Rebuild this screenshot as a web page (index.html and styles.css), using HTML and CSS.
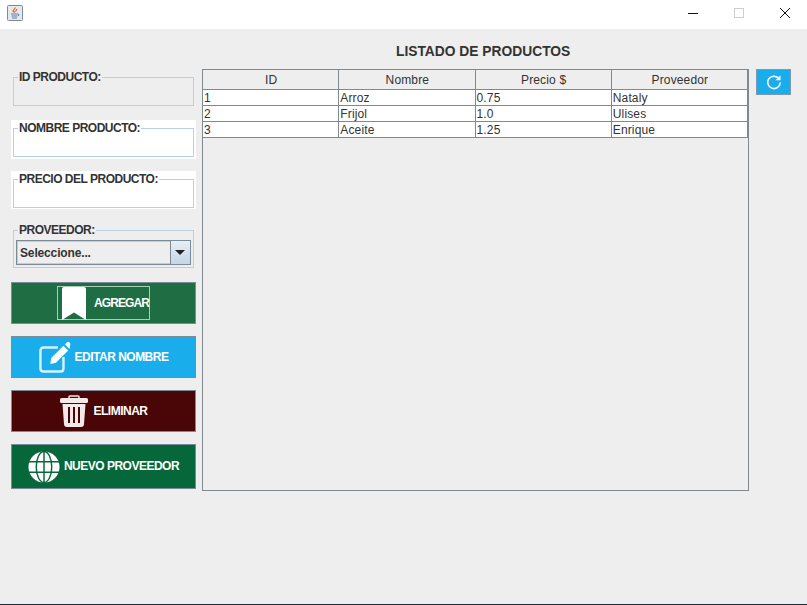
FILE: index.html
```html
<!DOCTYPE html>
<html lang="en">
<head>
  <meta charset="UTF-8" />
  <title>Productos</title>
  <link rel="stylesheet" href="styles.css">
</head>
<body>

  <div class="titlebar">
    <svg class="app-icon" width="16" height="16" viewBox="0 0 16 16">
      <rect x="0.5" y="0.5" width="15" height="15" rx="1" fill="#e4e9ef" stroke="#7f8a96"/>
      <path d="M8.500 2.500 L6 6 L8 7.500 M10 4 L8.500 6.500" fill="none" stroke="#d9662b" stroke-width="1.200"/>
      <path d="M4 9 H11 M4.500 11 H10.500 M5 13 H10" stroke="#5f7fa5" stroke-width="1"/>
      <path d="M11 9 Q13.500 9.500 11 11" fill="none" stroke="#5f7fa5"/>
    </svg>
    <div class="win-buttons">
      <svg width="12" height="12" viewBox="0 0 12 12"><path d="M1 6.500 H11" stroke="#111" stroke-width="1"/></svg>
      <svg width="12" height="12" viewBox="0 0 12 12"><rect x="1.500" y="1.500" width="9" height="9" fill="none" stroke="#cfcfcf"/></svg>
      <svg width="12" height="12" viewBox="0 0 12 12"><path d="M1 1 L11 11 M11 1 L1 11" stroke="#111" stroke-width="1"/></svg>
    </div>
  </div>

  <div class="main">
    <div class="sidebar">
      <div class="field">
        <fieldset><legend>ID PRODUCTO:</legend></fieldset>
      </div>
      <div class="field white">
        <fieldset><legend>NOMBRE PRODUCTO:</legend></fieldset>
      </div>
      <div class="field white">
        <fieldset><legend>PRECIO DEL PRODUCTO:</legend></fieldset>
      </div>
      <div class="field">
        <fieldset class="combo-set">
          <legend>PROVEEDOR:</legend>
          <div class="combo">
            <span class="combo-text">Seleccione...</span>
            <span class="combo-arrow"></span>
          </div>
        </fieldset>
      </div>

      <div class="actions">
        <div class="btn green">
          <div class="focus-box">
            <svg width="24" height="33" viewBox="0 0 24 33"><path d="M2 0 H22 Q24 0 24 2 V33 L12 25.500 L0 33 V2 Q0 0 2 0 Z" fill="#fff"/></svg>
            <span class="agregar">AGREGAR</span>
          </div>
        </div>
        <div class="btn blue">
          <svg width="32" height="32" viewBox="0 0 34 34">
            <path d="M20 7 H5 Q1.500 7 1.500 10.500 V29 Q1.500 32.500 5 32.500 H23 Q26 32.500 26 29 V17" fill="none" stroke="#d5f1fd" stroke-width="2.600"/>
            <path d="M12 24.500 L13 18 L26 5 L31 10 L18 23 Z M27.500 3.500 L29.500 1.500 Q31 0 32.500 1.500 Q34 3 33 4.500 L32.500 8.500 Z" fill="#fff"/>
          </svg>
          <span>EDITAR NOMBRE</span>
        </div>
        <div class="btn maroon">
          <svg width="28" height="32" viewBox="0 0 28 32">
            <path d="M9 3 V2 Q9 1 10 1 H18 Q19 1 19 2 V3" fill="none" stroke="#f3e9e9" stroke-width="1.500"/>
            <rect x="0" y="3" width="28" height="5" rx="1.500" fill="#f3e9e9"/>
            <path d="M2.500 9 H25.500 L24 29 Q24 32 21 32 H7 Q4 32 4 29 Z" fill="#f3e9e9"/>
            <path d="M9 12 V28 M14 12 V28 M19 12 V28" stroke="#4a0507" stroke-width="2"/>
          </svg>
          <span>ELIMINAR</span>
        </div>
        <div class="btn dark-green">
          <svg width="32" height="32" viewBox="0 0 33 33">
            <circle cx="16.500" cy="16.500" r="16" fill="#fff"/>
            <g fill="none" stroke="#06683a" stroke-width="1.500">
              <ellipse cx="16.500" cy="16.500" rx="8" ry="16"/>
              <path d="M16.500 0 V33 M1 11 H32 M1 22 H32"/>
            </g>
          </svg>
          <span>NUEVO PROVEEDOR</span>
        </div>
      </div>
    </div>

    <div class="content">
      <h1>LISTADO DE PRODUCTOS</h1>
      <div class="table-row">
        <div class="table-pane">
          <table>
            <thead>
              <tr><th>ID</th><th>Nombre</th><th>Precio $</th><th>Proveedor</th></tr>
            </thead>
            <tbody>
              <tr><td>1</td><td>Arroz</td><td>0.75</td><td>Nataly</td></tr>
              <tr><td>2</td><td>Frijol</td><td>1.0</td><td>Ulises</td></tr>
              <tr><td>3</td><td>Aceite</td><td>1.25</td><td>Enrique</td></tr>
            </tbody>
          </table>
        </div>
        <div class="refresh">
          <svg width="16" height="16" viewBox="0 0 18 18">
            <path d="M14.800 5.500 A7 7 0 1 0 16 9.500" fill="none" stroke="#fff" stroke-width="1.700"/>
            <path d="M16.300 1.500 V7 H10.800 Z" fill="#fff"/>
          </svg>
        </div>
      </div>
    </div>
  </div>

</body>
</html>
```

FILE: styles.css
```css
* {
  box-sizing: border-box;
}

html, body {
  margin: 0;
  height: 100%;
}

body {
  display: flex;
  flex-direction: column;
  height: 605px;
  overflow: hidden;
  background-color: #eeeeee;
  border-bottom: 1px solid #1c2a30;
  font-family: "Liberation Sans", Arial, sans-serif;
  color: #333;
}

.titlebar {
  display: flex;
  align-items: center;
  justify-content: space-between;
  height: 29px;
  padding: 0 16px 3px 7px;
  background: white;
}

.win-buttons {
  display: flex;
  gap: 34px;
}

.main {
  display: flex;
  flex: 1;
  padding: 0 0 0 11px;
}

.sidebar {
  width: 185px;
  margin-right: 6px;
  padding-top: 41px;
}

.field {
  padding: 0 2px;
  margin-bottom: 14px;
}

.field.white {
  background: white;
  padding: 1px 2px 2px;
  margin-bottom: 12px;
}

.field.white + .field.white {
  padding-bottom: 1px;
  margin-bottom: 14px;
}

fieldset {
  height: 36px;
  margin: 0;
  padding: 0;
  border: 1px solid #b8cfe5;
}

legend {
  margin-left: 4px;
  padding: 0 1px;
  font-size: 12px;
  font-weight: bold;
  line-height: 14px;
  letter-spacing: -0.500px;
}

.combo-set {
  height: 45px;
}

.combo {
  display: flex;
  height: 25px;
  margin: 3px 2px 0;
  border: 1px solid #7a8a99;
  background: #eeeeee;
  box-shadow: inset 0 0 0 1px #b8cfe5;
}

.combo-text {
  flex: 1;
  padding-left: 3px;
  font-size: 12px;
  font-weight: bold;
  line-height: 24px;
  letter-spacing: -0.150px;
}

.combo-arrow {
  position: relative;
  width: 20px;
  border-left: 1px solid #7a8a99;
  background: linear-gradient(#e6eef6, #c5d6e6);
}

.combo-arrow::after {
  content: "";
  position: absolute;
  left: 4px;
  top: 9px;
  border-style: solid;
  border-width: 5px 5px 0;
  border-color: #222 transparent transparent;
}

.actions {
  display: flex;
  flex-direction: column;
  gap: 12px;
}

.btn {
  display: flex;
  align-items: center;
  justify-content: center;
  gap: 4px;
  height: 42px;
  border: 1px solid #7a8a99;
  color: white;
  font-size: 12px;
  font-weight: bold;
  letter-spacing: -0.500px;
}

.btn svg {
  flex-shrink: 0;
}

.btn.green {
  background: #1f6e43;
}

.btn.blue {
  background: #19aeeb;
}

.btn.maroon {
  background: #4a0507;
  gap: 6px;
}

.btn.dark-green {
  height: 45px;
  background: #06683a;
}

.dark-green span {
  margin-bottom: 2px;
}

.focus-box {
  display: flex;
  align-items: center;
  width: 93px;
  height: 34px;
  padding-left: 4px;
  border: 1px solid #a9cdbb;
}

.agregar {
  margin-left: 8px;
  letter-spacing: -0.900px;
}

.content {
  flex: 1;
  padding-top: 15px;
}

h1 {
  margin: 0 0 10px 194px;
  font-size: 13.800px;
  font-weight: bold;
  line-height: 15px;
}

.table-row {
  display: flex;
  align-items: flex-start;
  gap: 7px;
}

.table-pane {
  width: 547px;
  height: 422px;
  border: 1px solid #808890;
}

table {
  width: 545px;
  border-collapse: separate;
  border-spacing: 0;
  table-layout: fixed;
  font-size: 12px;
  letter-spacing: 0.150px;
}

th {
  height: 20px;
  padding: 1px 0 0 1px;
  border-right: 1px solid #808890;
  border-bottom: 1px solid #808890;
  font-weight: normal;
  text-align: center;
}

td {
  height: 16px;
  padding: 1px 0 0 1px;
  background: white;
  border-right: 1px solid #808890;
  border-bottom: 1px solid #808890;
  line-height: 14px;
}

.refresh {
  display: flex;
  align-items: center;
  justify-content: center;
  width: 35px;
  height: 26px;
  background: #19aeeb;
  border: 1px solid #7a9ab0;
}
```
